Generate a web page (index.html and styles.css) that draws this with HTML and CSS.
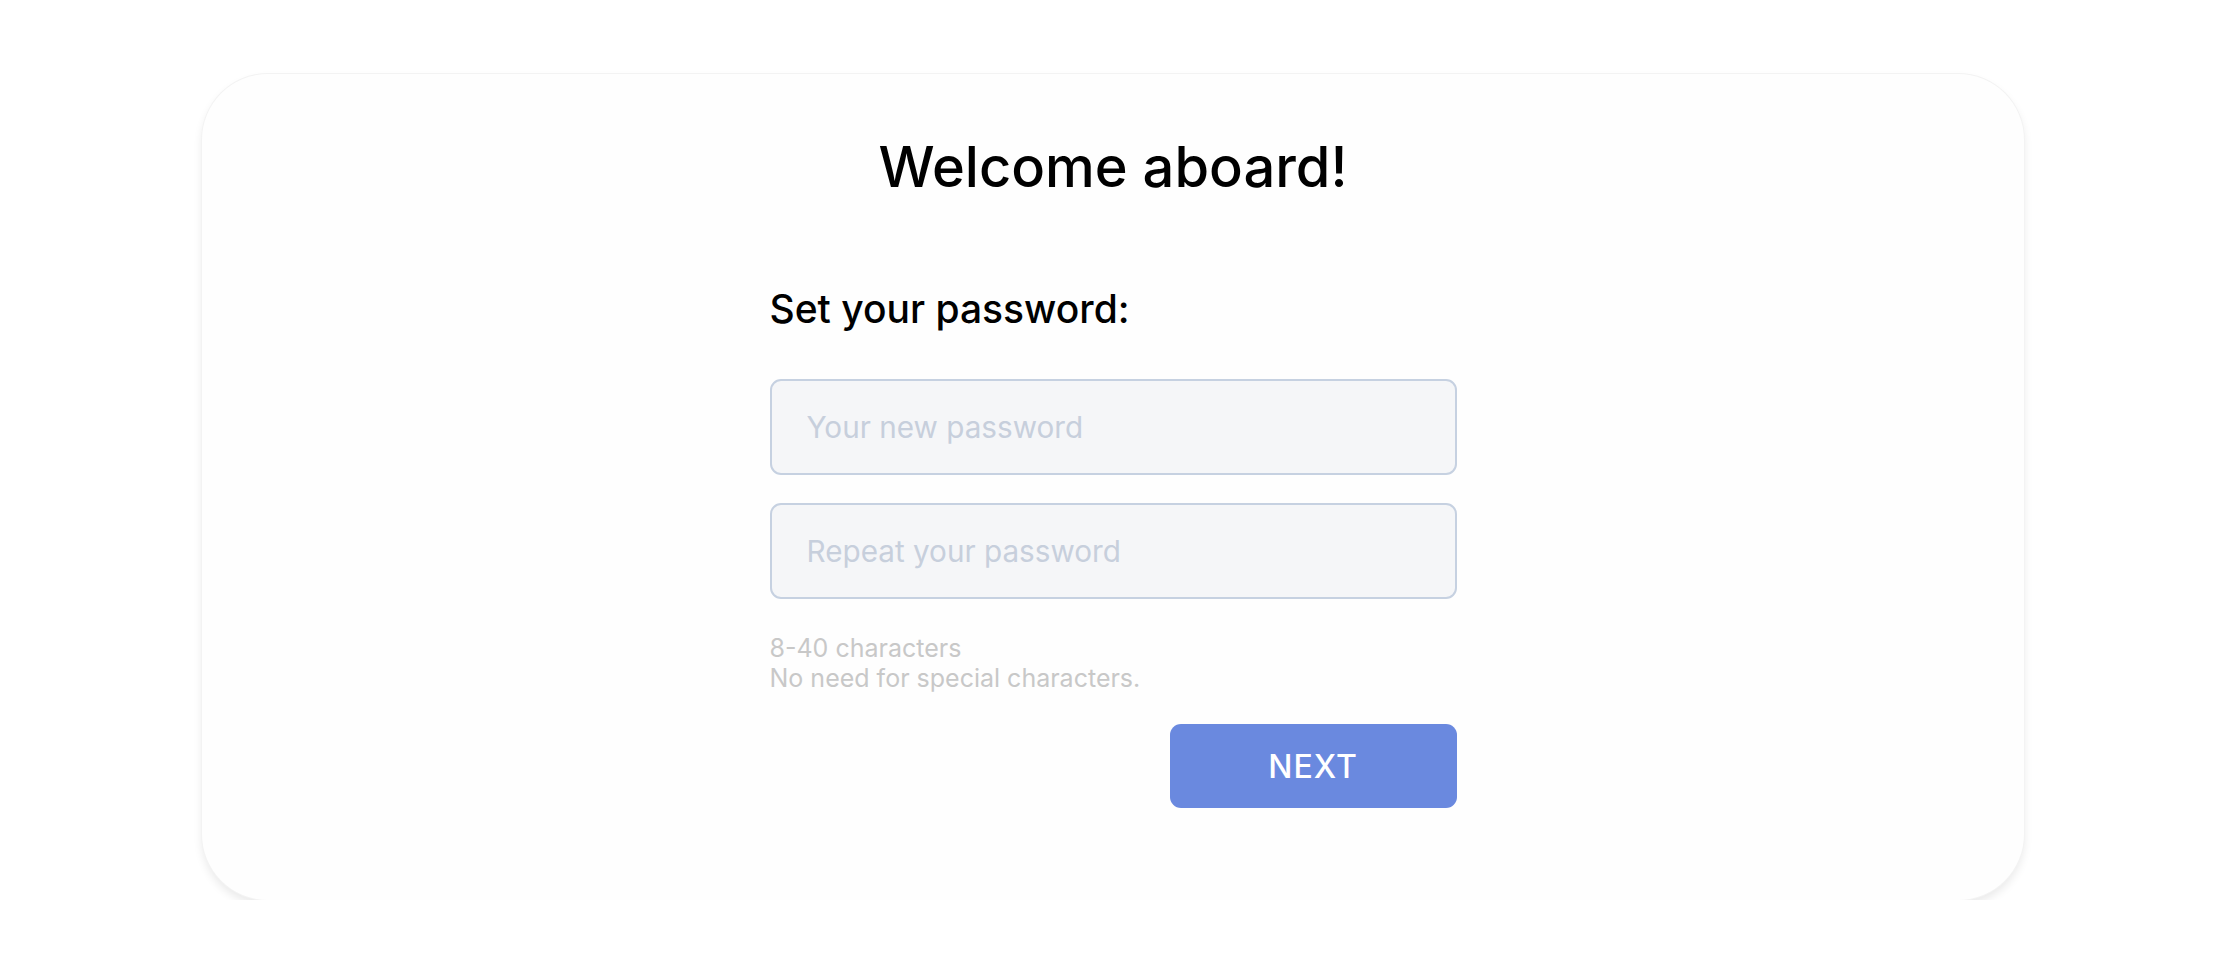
FILE: index.html
```html
<!DOCTYPE html>
<html lang="en">
<head>
<meta charset="utf-8">
<title>Welcome aboard!</title>
<link rel="stylesheet" href="styles.css">
</head>
<body>
<main class="card">
  <h1 class="title">Welcome aboard!</h1>
  <form class="form">
    <h2 class="subtitle">Set your password:</h2>
    <input class="field" type="password" placeholder="Your new password">
    <input class="field field-second" type="password" placeholder="Repeat your password">
    <p class="hint">8-40 characters<br>No need for special characters.</p>
    <div class="actions">
      <button class="next" type="button">NEXT</button>
    </div>
  </form>
</main>
</body>
</html>
```

FILE: styles.css
```css
* { box-sizing: border-box; }

html, body {
  margin: 0;
  padding: 0;
  background: #ffffff;
}

body {
  font-family: "Inter", "Noto Sans", sans-serif;
  color: #000;
  padding-top: 74px;
}

.card {
  width: 1822px;
  margin: 0 auto;
  background: #fefefe;
  border-radius: 66px;
  box-shadow: 0 0 0 1px #f3f3f3, 0 5px 10px rgba(0, 0, 0, 0.09);
  padding: 57px 0 92px;
  display: flex;
  flex-direction: column;
  align-items: center;
}

.title {
  margin: 0;
  font-size: 56px;
  line-height: 72px;
  font-weight: 500;
}

.form {
  width: 687px;
  margin: 86px 0 0;
  display: flex;
  flex-direction: column;
}

.subtitle {
  margin: 0 0 50px;
  font-size: 39px;
  line-height: 40px;
  font-weight: 500;
}

.field {
  display: block;
  width: 100%;
  height: 96px;
  border: 2px solid #c6d1e1;
  border-radius: 11px;
  background: #f5f6f8;
  padding: 0 35px;
  font-family: "Inter", "Noto Sans", sans-serif;
  font-size: 29.7px;
  color: #333;
  outline: none;
}

.field::placeholder {
  color: #c7cfdc;
}

.field-second {
  margin-top: 28px;
}

.hint {
  margin: 34px 0 0;
  font-size: 25px;
  line-height: 30px;
  color: #c8c8c8;
}

.actions {
  margin-top: 31px;
  display: flex;
  justify-content: flex-end;
}

.next {
  width: 287px;
  height: 84px;
  border: none;
  border-radius: 11px;
  background: #6a89df;
  color: #ffffff;
  font-family: "Inter", "Noto Sans", sans-serif;
  font-size: 32px;
  font-weight: 500;
  letter-spacing: 1px;
  cursor: pointer;
}
```
